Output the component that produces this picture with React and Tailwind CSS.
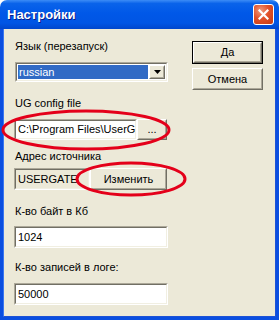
import React from "react";

function Sunken({ className = "", children }) {
  return (
    <div className={`border border-t-[#aca899] border-l-[#aca899] border-b-white border-r-white ${className}`}>
      <div className="w-full h-full border border-t-[#716f64] border-l-[#716f64] border-b-[#f1efe2] border-r-[#f1efe2] bg-white flex items-center overflow-hidden">
        {children}
      </div>
    </div>
  );
}

function Raised({ className = "", children, def = false }) {
  const inner = (
    <div className="w-full h-full border border-t-white border-l-white border-b-[#716f64] border-r-[#716f64] flex">
      <div className="flex-1 border border-t-[#ece9d8] border-l-[#ece9d8] border-b-[#aca899] border-r-[#aca899] bg-[#ece9d8] flex items-center justify-center">
        {children}
      </div>
    </div>
  );
  if (def) return <div className={`border border-black ${className}`}>{inner}</div>;
  return <div className={className}>{inner}</div>;
}

export default function App() {
  return (
    <div
      className="relative w-[279px] h-[320px] flex flex-col overflow-hidden text-[11px] leading-[13px] text-black"
      style={{ fontFamily: '"Liberation Sans", Arial, sans-serif' }}
    >
      {/* Title bar */}
      <div className="h-[29px] shrink-0 rounded-t-[7px] bg-[linear-gradient(180deg,#3c8cf6_0%,#0a63ea_12%,#0058e8_45%,#0055e4_80%,#0046cc_100%)] flex items-center pl-[7px] pr-[5px]">
        <span className="text-white font-bold text-[13px] leading-[15px] [text-shadow:1px_1px_0_#0a1e8c]">Настройки</span>
        <div className="ml-auto w-[21px] h-[21px] rounded-[3px] border border-white bg-[radial-gradient(circle_at_35%_30%,#f09a7c_0%,#e2512a_45%,#c23a14_100%)] flex items-center justify-center">
          <svg width="11" height="11" viewBox="0 0 11 11">
            <path d="M1.5 1.5 L9.5 9.5 M9.5 1.5 L1.5 9.5" stroke="white" strokeWidth="2.2" strokeLinecap="square" />
          </svg>
        </div>
      </div>

      {/* Body */}
      <div className="flex-1 flex bg-[#0a4ee0] px-[3px] pb-[3px]">
        <div className="flex-1 bg-[#ece9d8] border-l border-r border-b border-l-[#3a76f0] border-r-[#1d52d6] border-b-[#1d52d6] flex pl-[10px]">
          {/* Left column */}
          <div className="w-[154px] flex flex-col pt-[11px]">
            <div className="h-[13px] pl-[1px]">Язык (перезапуск)</div>
            <div className="mt-[9px] h-[20px] ml-[1px] border border-t-[#aca899] border-l-[#aca899] border-b-white border-r-white">
              <div className="h-full border border-t-[#716f64] border-l-[#716f64] border-b-[#f1efe2] border-r-[#f1efe2] bg-white flex items-stretch p-[1px]">
                <div className="flex-1 bg-[#316ac5] text-white flex items-center pl-[1px]">russian</div>
                <Raised className="w-[16px] ml-[1px]">
                  <svg width="7" height="4" viewBox="0 0 7 4"><path d="M0 0H7L3.5 4Z" fill="black" /></svg>
                </Raised>
              </div>
            </div>

            <div className="mt-[15px] h-[13px] pl-[1px]">UG config file</div>
            <div className="mt-[9px] h-[21px] flex">
              <Sunken className="w-[123px] h-full">
                <span className="pl-[2px] whitespace-nowrap">C:\Program Files\UserG</span>
              </Sunken>
              <Raised className="w-[30px] h-full">...</Raised>
            </div>

            <div className="mt-[10px] h-[13px] pl-[1px]">Адрес источника</div>
            <div className="mt-[5px] h-[22px] flex">
              <div className="w-[76px] h-full border border-t-[#aca899] border-l-[#aca899] border-b-white border-r-white">
                <div className="w-full h-full border border-t-[#716f64] border-l-[#716f64] border-b-[#f1efe2] border-r-[#f1efe2] bg-[#ece9d8] flex items-center pl-[2px] overflow-hidden whitespace-nowrap">USERGATE</div>
              </div>
              <Raised className="w-[77px] h-full">Изменить</Raised>
            </div>

            <div className="mt-[15px] h-[13px] pl-[1px]">К-во байт в Кб</div>
            <Sunken className="mt-[8px] h-[22px]">
              <span className="pl-[2px]">1024</span>
            </Sunken>

            <div className="mt-[13px] h-[13px] pl-[1px]">К-во записей в логе:</div>
            <Sunken className="mt-[9px] h-[22px]">
              <span className="pl-[2px]">50000</span>
            </Sunken>
          </div>

          {/* Right column */}
          <div className="ml-[24px] flex flex-col pt-[12px] gap-[4px]">
            <Raised def className="w-[71px] h-[23px]">Да</Raised>
            <Raised className="w-[71px] h-[22px]">Отмена</Raised>
          </div>
        </div>
      </div>

      {/* Red annotation ellipses */}
      <svg className="absolute left-0 top-0 pointer-events-none" width="279" height="320">
        <ellipse cx="86" cy="130" rx="83" ry="19" fill="none" stroke="#e4001a" strokeWidth="3" />
        <ellipse cx="131" cy="179" rx="54" ry="16" fill="none" stroke="#e4001a" strokeWidth="3" />
      </svg>
    </div>
  );
}
